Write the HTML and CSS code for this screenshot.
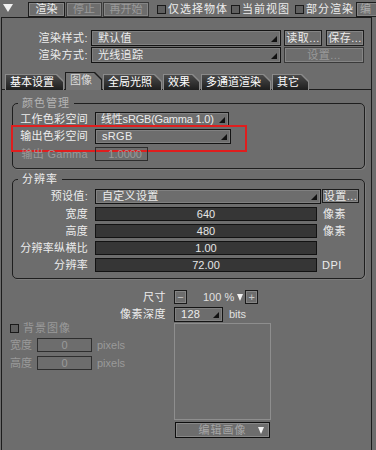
FILE: index.html
```html
<!DOCTYPE html>
<html lang="zh">
<head>
  <meta charset="UTF-8">
  <title>渲染设置</title>
  <link rel="stylesheet" href="styles.css">
</head>
<body>

  <!-- barra superior -->
  <div class="topbar">
    <span class="collapse"></span>
    <button class="btn top first">渲染</button>
    <button class="btn top stop off">停止</button>
    <button class="btn top restart off">再开始</button>
    <span class="check c1"><span class="box"></span>仅选择物体</span>
    <span class="check c2"><span class="box"></span>当前视图</span>
    <span class="check c3"><span class="box"></span>部分渲染</span>
    <button class="btn top edge">编</button>
  </div>

  <div class="panel">
    <div class="presets">
      <div class="prow">
        <span class="plabel">渲染样式:</span>
        <div class="drop wide">默认值</div>
        <button class="btn sm">读取...</button>
        <button class="btn sm b2">保存...</button>
      </div>
      <div class="prow">
        <span class="plabel">渲染方式:</span>
        <div class="drop wide">光线追踪</div>
        <button class="btn sm long off">设置...</button>
      </div>
    </div>

    <div class="tabs">
      <div class="tab"><span>基本设置</span></div>
      <div class="tab active"><span>图像</span></div>
      <div class="tab"><span>全局光照</span></div>
      <div class="tab"><span>效果</span></div>
      <div class="tab"><span>多通道渲染</span></div>
      <div class="tab"><span>其它</span></div>
    </div>

    <!-- grupo: color -->
    <div class="group g1">
      <div class="gtitle dim">颜色管理</div>
      <div class="grow">
        <span class="glabel">工作色彩空间</span>
        <div class="drop cs">线性sRGB(Gamma 1.0)</div>
      </div>
      <div class="grow marked">
        <span class="glabel">输出色彩空间</span>
        <div class="drop cs2">sRGB</div>
      </div>
      <div class="grow short">
        <span class="glabel off">输出 Gamma</span>
        <div class="field off gamma">1.0000</div>
      </div>
    </div>

    <!-- grupo: resolucion -->
    <div class="group g2">
      <div class="gtitle">分辨率</div>
      <div class="grow">
        <span class="glabel">预设值:</span>
        <div class="drop preset">自定义设置</div>
        <button class="btn setbtn">设置...</button>
      </div>
      <div class="grow short">
        <span class="glabel">宽度</span>
        <div class="num">640</div>
        <span class="unit">像素</span>
      </div>
      <div class="grow short">
        <span class="glabel">高度</span>
        <div class="num">480</div>
        <span class="unit">像素</span>
      </div>
      <div class="grow short">
        <span class="glabel">分辨率纵横比</span>
        <div class="num">1.00</div>
      </div>
      <div class="grow short">
        <span class="glabel">分辨率</span>
        <div class="num">72.00</div>
        <span class="unit latin">DPI</span>
      </div>
    </div>

    <!-- parte inferior -->
    <div class="bottom">
      <div class="brow r1">
        <span class="blabel">尺寸</span>
        <button class="mini">−</button>
        <span class="pct">100 %</span>
        <span class="wtri"></span>
        <button class="mini plus">+</button>
      </div>
      <div class="brow r2">
        <span class="blabel">像素深度</span>
        <div class="drop depth">128</div>
        <span class="bits">bits</span>
      </div>
      <div class="brow r3">
        <div class="bgimg">
          <div class="check off"><span class="box"></span>背景图像</div>
          <div class="bgrow">
            <span class="off">宽度</span>
            <div class="field off px">0</div>
            <span class="off">pixels</span>
          </div>
          <div class="bgrow">
            <span class="off">高度</span>
            <div class="field off px">0</div>
            <span class="off">pixels</span>
          </div>
        </div>
        <div class="preview-col">
          <div class="preview"></div>
          <button class="editbtn">编辑画像<span class="wtri"></span></button>
        </div>
      </div>
    </div>
  </div>

</body>
</html>
```

FILE: styles.css
```css
* {
  box-sizing: border-box;
}

body {
  margin: 0;
  width: 376px;
  height: 450px;
  overflow: hidden;
  background-color: #6d6d6d;
  color: #ececec;
  font-family: "Liberation Sans", "Noto Sans CJK SC", sans-serif;
  font-size: 11px;
  line-height: 1;
}

button {
  font: inherit;
  color: inherit;
  padding: 0;
}

.off {
  color: #9a9a9a;
}

/* botones */
.btn {
  height: 15px;
  background-color: #6d6d6d;
  border: 1px solid #1c1c1c;
  box-shadow: inset 0 0 0 1px #858585;
  line-height: 13px;
  letter-spacing: 0.5px;
  white-space: nowrap;
}

.btn.off {
  color: #9a9a9a;
  border-color: #3a3a3a;
}

/* barra superior */
.topbar {
  height: 17px;
  display: flex;
  align-items: flex-start;
  white-space: nowrap;
}

.collapse {
  flex-shrink: 0;
  margin: 4px 0 0 3px;
  border-left: 5px solid transparent;
  border-right: 5px solid transparent;
  border-top: 8px solid #f2f2f2;
}

.btn.top {
  flex-shrink: 0;
  width: 37px;
  margin-top: 2px;
  margin-left: 1px;
  letter-spacing: 0;
}

.btn.top.first {
  margin-left: 15px;
}

.btn.top.stop {
  width: 36px;
}

.btn.top.restart {
  width: 46px;
}

.check {
  display: flex;
  align-items: center;
  flex-shrink: 0;
  letter-spacing: 1px;
}

.topbar .check {
  height: 17px;
  margin-top: 1px;
}

.check .box {
  width: 9px;
  height: 9px;
  background-color: #5f5f5f;
  border: 1px solid #1a1a1a;
  margin-right: 2px;
}

.c1 {
  margin-left: 8px;
}

.c2 {
  margin-left: 3px;
}

.c3 {
  margin-left: 5px;
}

.btn.top.edge {
  margin-left: 2px;
  width: 30px;
  text-align: left;
  padding-left: 3px;
  color: #aaa;
}

/* panel */
.panel {
  margin-left: 1px;
  width: 371px;
  height: 433px;
  border: 1px solid #1c1c1c;
  border-bottom: none;
}

.presets {
  padding-top: 12px;
}

.prow {
  display: flex;
  align-items: center;
  height: 16px;
}

.prow + .prow {
  margin-top: 1px;
}

.plabel {
  width: 86px;
  text-align: right;
  letter-spacing: 0.5px;
}

.drop {
  position: relative;
  height: 15px;
  border: 1px solid #141414;
  box-shadow: inset 0 0 0 1px #808080;
  padding-left: 6px;
  line-height: 13px;
  white-space: nowrap;
  overflow: hidden;
  letter-spacing: 0.3px;
}

.drop::after {
  content: "";
  position: absolute;
  right: 3px;
  bottom: 3px;
  border-left: 6px solid transparent;
  border-bottom: 6px solid #111;
}

.prow .drop,
.prow .btn {
  height: 16px;
  line-height: 14px;
}

.drop.wide {
  width: 190px;
  margin-left: 3px;
}

.btn.sm {
  width: 38px;
  margin-left: 3px;
}

.btn.sm.b2 {
  margin-left: 4px;
}

.btn.sm.long {
  width: 80px;
}

/* pestañas */
.tabs {
  display: flex;
  align-items: flex-end;
  height: 18px;
  margin-top: 9px;
  padding-left: 3px;
  border-bottom: 1px solid #1c1c1c;
}

.tab {
  height: 16px;
  margin-bottom: -1px;
  margin-right: 1px;
  padding: 1px 1px 0 1px;
  background-color: #8a8a8a;
  clip-path: polygon(0 0, calc(100% - 7px) 0, 100% 7px, 100% 100%, 0 100%);
}

.tab span {
  display: block;
  height: 15px;
  padding: 0 9px 0 4px;
  line-height: 15px;
  white-space: nowrap;
  color: #ffffff;
  background: linear-gradient(#4a4a4a, #1e1e1e);
  clip-path: polygon(0 0, calc(100% - 7px) 0, 100% 7px, 100% 100%, 0 100%);
}

.tab.active {
  height: 18px;
  background-color: #1c1c1c;
}

.tab.active span {
  height: 17px;
  line-height: 15px;
  background: #747474;
  color: #dcdcdc;
}

/* grupos */
.group {
  margin-left: 10px;
  width: 353px;
  border: 1px solid #1e1e1e;
  border-radius: 5px;
  box-shadow: 1px 1px 0 #7c7c7c;
}

.g1 {
  margin-top: 13px;
  padding-bottom: 7px;
}

.g2 {
  margin-top: 10px;
  padding-bottom: 6px;
}

.gtitle {
  width: fit-content;
  margin: -7px 0 0 5px;
  padding: 0 4px;
  height: 13px;
  line-height: 13px;
  background-color: #6d6d6d;
  letter-spacing: 1px;
}

.gtitle.dim {
  color: #b4b4b4;
}

.g1 .gtitle {
  margin-bottom: 2px;
}

.g2 .gtitle {
  margin-bottom: 3px;
}

.grow {
  position: relative;
  display: flex;
  align-items: center;
  height: 15px;
  margin-top: 2px;
}

.grow.short {
  height: 14px;
  margin-top: 3px;
}

.glabel {
  width: 75px;
  margin-right: 7px;
  text-align: right;
  white-space: nowrap;
  letter-spacing: 0.3px;
}

.marked::after {
  content: "";
  position: absolute;
  left: -2px;
  top: -4px;
  width: 232px;
  height: 23px;
  border: 2px solid #e01e1e;
}

.drop.cs {
  width: 134px;
  padding-left: 5px;
  letter-spacing: -0.2px;
}

.drop.cs2 {
  width: 136px;
}

.field {
  height: 14px;
  border: 1px solid #2e2e2e;
  line-height: 12px;
}

.field.gamma {
  width: 53px;
  text-align: right;
  padding-right: 5px;
}

.drop.preset {
  width: 226px;
}

.btn.setbtn {
  width: 37px;
  height: 14px;
  margin-left: 1px;
  align-self: flex-start;
  line-height: 12px;
}

.num {
  width: 222px;
  height: 14px;
  background-color: #363636;
  border: 1px solid #121212;
  text-align: center;
  line-height: 12px;
  color: #e6e6e6;
}

.unit {
  margin-left: 6px;
  letter-spacing: 0.5px;
}

.unit.latin {
  margin-left: 5px;
}

/* parte inferior */
.bottom {
  margin-top: 11px;
  padding-left: 8px;
}

.brow {
  display: flex;
  align-items: center;
}

.r1 {
  height: 14px;
}

.r2 {
  height: 15px;
  margin-top: 3px;
}

.r3 {
  align-items: flex-start;
  margin-top: 1px;
}

.blabel {
  width: 156px;
  margin-right: 8px;
  text-align: right;
  letter-spacing: 0.5px;
}

.mini {
  width: 13px;
  height: 14px;
  background-color: #6d6d6d;
  border: 1px solid #1a1a1a;
  box-shadow: inset 0 0 0 1px #858585;
  line-height: 11px;
  color: #c8c8c8;
}

.mini.plus {
  margin-left: 2px;
}

.pct {
  margin-left: 16px;
  color: #e0e0e0;
}

.wtri {
  display: inline-block;
  margin-left: 3px;
  border-left: 3px solid transparent;
  border-right: 3px solid transparent;
  border-top: 7px solid #f2f2f2;
}

.drop.depth {
  width: 49px;
}

.bits {
  margin-left: 6px;
  color: #e0e0e0;
}

.bgimg {
  width: 164px;
}

.bgimg .check .box {
  margin-right: 4px;
}

.bgrow {
  display: flex;
  align-items: center;
  height: 14px;
  margin-top: 4px;
  gap: 5px;
}

.bgimg .check {
  height: 11px;
}

.field.px {
  width: 55px;
  text-align: center;
}

.preview-col {
  width: 97px;
}

.preview {
  height: 97px;
  border: 1px solid #8e8e8e;
}

.editbtn {
  position: relative;
  display: flex;
  align-items: center;
  justify-content: center;
  margin: 2px 0 0 1px;
  width: 95px;
  height: 16px;
  background-color: #6d6d6d;
  border: 1px solid #0e0e0e;
  box-shadow: inset 0 0 0 1px #888;
  color: #a6a6a6;
  letter-spacing: 1px;
}

.editbtn .wtri {
  position: absolute;
  right: 5px;
  top: 4px;
}
```
